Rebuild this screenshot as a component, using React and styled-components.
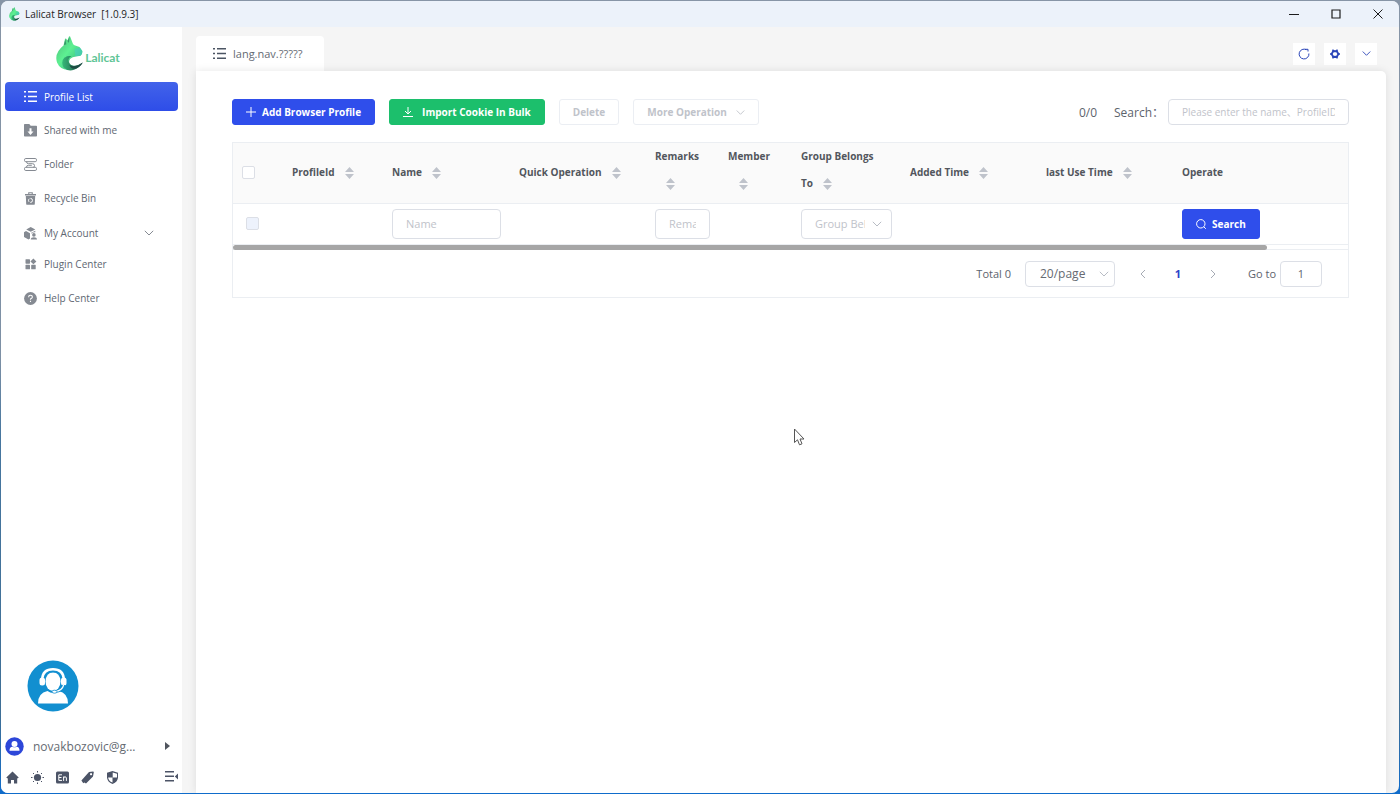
import React from "react";
import styled, { createGlobalStyle, css } from "styled-components";

const GlobalStyle = createGlobalStyle`
  *, *::before, *::after { box-sizing: border-box; }
  body {
    margin: 0;
    background: linear-gradient(#8795a6 0%, #7d90a5 45%, #46769f 55%, #3f6f96 90%, #0f6ccb 100%);
    font-family: "Open Sans", "Noto Sans CJK SC", sans-serif;
    font-size: 10px;
    color: #5d636d;
  }
  button, input, select { font: inherit; color: inherit; margin: 0; }
  button { cursor: pointer; padding: 0; border: 0; background: none; }
  a { color: inherit; text-decoration: none; }
  svg { display: block; flex: none; }
`;

const Window = styled.div`
  display: flex;
  flex-direction: column;
  min-height: calc(100vh - 2px);
  margin: 1px;
  border-radius: 7px;
  overflow: hidden;
  background: #f5f5f5;
`;

const TitleBar = styled.header`
  display: flex;
  align-items: center;
  height: 26px;
  padding: 0 11px 0 8px;
  gap: 5px;
  background: #ecf2fa;
  color: #1c1c1c;
`;

const TitleText = styled.span`
  flex: 1;
  white-space: pre;
`;

const WindowControls = styled.div`
  display: flex;
  gap: 22px;
`;

const WindowButton = styled.button`
  display: grid;
  place-items: center;
  width: 20px;
  height: 24px;
`;

const Body = styled.div`
  display: flex;
  flex: 1;
`;

const Sidebar = styled.aside`
  display: flex;
  flex-direction: column;
  flex: none;
  width: 181px;
  padding: 8px 4px 9px;
  background: #fff;
`;

const Brand = styled.a`
  display: flex;
  justify-content: center;
  align-items: center;
  height: 37px;
  margin-bottom: 10px;
  padding-right: 7px;
`;

const BrandName = styled.span`
  margin: 8px 0 0 1px;
  font: 700 12px Lato, sans-serif;
  color: #5fc596;
`;

const Nav = styled.nav`
  display: flex;
  flex-direction: column;
  gap: 4px;
`;

const NavLink = styled.a`
  display: flex;
  align-items: center;
  gap: 7px;
  height: ${(p) => (p.$expandable ? 28 : p.$active ? 29 : 30)}px;
  padding: ${(p) => (p.$expandable ? "4px" : "0")} 24px 0 19px;
  border-radius: 4px;
  color: #606772;
  > svg { color: #858a92; }
  ${(p) => p.$active && css`
    background: linear-gradient(#4263ea, #2e4de8);
    color: #fff;
    > svg { color: #fff; }
  `}
`;

const NavLabel = styled.span`
  flex: 1;
`;

const SupportButton = styled.button`
  width: 52px;
  height: 52px;
  margin: auto 0 24px 22px;
`;

const UserRow = styled.button`
  display: flex;
  align-items: center;
  gap: 9px;
  height: 20px;
  padding-right: 6px;
  font-size: 12px;
  text-align: left;
  color: #666b73;
`;

const UserName = styled.span`
  flex: 1;
`;

const ToolRow = styled.div`
  display: flex;
  align-items: center;
  gap: 11px;
  margin-top: 14px;
  color: #4c5467;
`;

const ToolButton = styled.button`
  display: grid;
  place-items: center;
  width: 14px;
  height: 14px;
  margin-left: ${(p) => (p.$last ? "auto" : "0")};
`;

const Main = styled.main`
  display: flex;
  flex-direction: column;
  flex: 1;
  min-width: 0;
  padding: 9px 13px 0 14px;
`;

const TopRow = styled.div`
  display: flex;
  justify-content: space-between;
  align-items: center;
  height: 35px;
  padding-right: 9px;
`;

const Tab = styled.button`
  display: flex;
  align-items: center;
  gap: 7px;
  height: 35px;
  width: 128px;
  padding-left: 17px;
  border-radius: 4px 4px 0 0;
  background: #fff;
  font-size: 11px;
  color: #646a73;
  > svg { color: #4b5563; }
`;

const Actions = styled.div`
  display: flex;
  gap: 9px;
`;

const ActionButton = styled.button`
  display: grid;
  place-items: center;
  width: 22px;
  height: 22px;
  background: #fff;
  color: #2b45b8;
`;

const Panel = styled.section`
  flex: 1;
  padding: 28px 37px 36px 36px;
  border-radius: 0 5px 0 0;
  background: #fff;
  box-shadow: 0 0 9px rgba(0, 0, 0, 0.1);
  clip-path: inset(-10px -12px 0 -12px);
`;

const Toolbar = styled.div`
  display: flex;
  align-items: center;
  gap: 14px;
  margin-bottom: 17px;
`;

const variants = {
  primary: css`background: #2f4eeb; border-color: #2f4eeb; color: #fff;`,
  success: css`background: #1cbf6c; border-color: #1cbf6c; color: #fff;`,
  plain: css`background: #fff; border-color: #ebeef3; color: #bfc3ca;`,
};

const Button = styled.button`
  display: flex;
  align-items: center;
  gap: ${(p) => (p.$wide ? 9 : 6)}px;
  height: ${(p) => (p.$tall ? 30 : 26)}px;
  padding: 0 13px;
  border: 1px solid;
  border-radius: 3px;
  font-weight: 700;
  white-space: nowrap;
  ${(p) => variants[p.$variant]}
`;

const SearchBox = styled.div`
  display: flex;
  align-items: center;
  gap: 17px;
  margin-left: auto;
  font-size: 12px;
`;

const SearchLabel = styled.label`
  display: flex;
  align-items: center;
  gap: 4px;
`;

const TextInput = styled.input`
  width: ${(p) => p.$width || "100%"};
  height: ${(p) => (p.$tall ? 30 : 26)}px;
  padding: 0 13px;
  border: 1px solid #dcdfe6;
  border-radius: 4px;
  background: #fff;
  outline: 0;
  font-size: ${(p) => (p.$small ? 10 : 11)}px;
  text-align: ${(p) => (p.$center ? "center" : "left")};
  &::placeholder { color: #bfc3ca; opacity: 1; }
`;

const TableCard = styled.div`
  border: 1px solid #ebeef2;
`;

const Table = styled.table`
  width: 100%;
  table-layout: fixed;
  border-collapse: collapse;
`;

const HeadCell = styled.th`
  height: 60px;
  padding: 0 9px ${(p) => (p.$twoLine ? 5 : 0)}px;
  border-bottom: 1px solid #ebeef2;
  background: #fafafa;
  font-weight: 700;
  line-height: 27px;
  text-align: left;
  color: #52565d;
`;

const KeepTogether = styled.span`
  white-space: nowrap;
`;

const Cell = styled.td`
  height: 41px;
  padding: 0 9px;
`;

const SortButton = styled.button`
  display: inline-grid;
  place-items: center;
  width: 30px;
  height: 14px;
  vertical-align: -3px;
  color: #bfc3cb;
`;

const Checkbox = styled.input`
  appearance: none;
  display: block;
  width: 13px;
  height: 13px;
  margin: 0 0 0 ${(p) => (p.disabled ? 4 : 0)}px;
  border: 1px solid #dcdfe6;
  border-radius: 2px;
  background: ${(p) => (p.disabled ? "#edf2fc" : "#fff")};
`;

const SelectBox = styled.span`
  position: relative;
  display: block;
  width: ${(p) => p.$width || "100%"};
  > svg {
    position: absolute;
    top: 50%;
    right: ${(p) => (p.$inset ? 10 : 6)}px;
    margin-top: -5px;
    color: #b8bcc4;
    pointer-events: none;
  }
`;

const Select = styled.select`
  display: block;
  appearance: none;
  width: 100%;
  height: ${(p) => (p.$tall ? 30 : 26)}px;
  padding: 0 26px 0 ${(p) => (p.$tall ? 13 : 14)}px;
  border: 1px solid #dcdfe6;
  border-radius: 4px;
  background: #fff;
  font-size: ${(p) => (p.$tall ? 11 : 12)}px;
  color: ${(p) => (p.$tall ? "#bfc3ca" : "#666a72")};
`;

const ScrollTrack = styled.div`
  height: 6px;
  border: solid #ebeef2;
  border-width: 1px 0;
  display: flex;
  align-items: center;
`;

const ScrollThumb = styled.div`
  flex: none;
  width: 92.7%;
  height: 5px;
  border-radius: 3px;
  background: #a6a6a6;
`;

const Pagination = styled.div`
  display: flex;
  justify-content: flex-end;
  align-items: center;
  height: 47px;
  padding-right: 26px;
  font-size: 11px;
`;

const Total = styled.span`
  margin-right: 14px;
`;

const Pages = styled.div`
  display: flex;
  align-items: center;
  justify-content: space-between;
  width: 82px;
  margin: 0 29px 0 22px;
`;

const PageButton = styled.button`
  display: grid;
  place-items: center;
  width: 12px;
  height: 20px;
  font-weight: 700;
  color: ${(p) => (p.$current ? "#2c43c8" : "#a6abb4")};
`;

const GoTo = styled.label`
  display: flex;
  align-items: center;
  gap: 4px;
`;

const Pointer = styled.svg`
  position: absolute;
  top: 428px;
  left: 793px;
  pointer-events: none;
`;

const Icon = ({ size = 13, box = 24, children }) => (
  <svg width={size} height={size} viewBox={`0 0 ${box} ${box}`} fill="currentColor" aria-hidden="true">
    {children}
  </svg>
);

const Line = ({ d, size = 10, width = 1 }) => (
  <svg width={size} height={size} viewBox="0 0 10 10" fill="none" stroke="currentColor" strokeWidth={width} aria-hidden="true">
    <path d={d} />
  </svg>
);

const ListIcon = () => (
  <Icon box={13}>
    <path d="M0 1h2v1.500H0zM4 1h9v1.500H4zM0 5.700h2v1.500H0zM4 5.700h9v1.500H4zM0 10.400h2v1.500H0zM4 10.400h9v1.500H4z" />
  </Icon>
);

const SharedIcon = () => (
  <Icon box={13}>
    <path fillRule="evenodd" d="M.8 0h4.500l1.400 1.700h5.500q.8 0 .8.800v9.200q0 .8-.8.800H.8q-.8 0-.8-.8V.8Q0 0 .8 0zM5.500 4.200v3.300H3.500L6.500 11l3-3.500h-2V4.200z" />
  </Icon>
);

const FolderIcon = () => (
  <svg width="13" height="13" viewBox="0 0 13 13" fill="none" stroke="currentColor" aria-hidden="true">
    <rect x=".5" y=".5" width="12" height="3.200" rx="1.300" />
    <rect x=".5" y="9.300" width="12" height="3.200" rx="1.300" />
    <path d="M2.500 3.700q0 2 2 2h4q2 0 2 1.800t-1.200 1.800M2.500 9.300q0-2 1.800-2h3.500" />
  </svg>
);

const BinIcon = () => (
  <Icon box={13}>
    <path fillRule="evenodd" d="M4.200.3h4.600V2H12v1.400H1V2h3.200zM5.300 1.200V2h2.400v-.8zM1.800 4.100h9.400l-.4 7.800q-.1.900-1 .9H3.200q-.9 0-1-.9z" />
    <circle cx="6.500" cy="8.400" r="2" fill="none" stroke="#fff" strokeWidth="1" strokeDasharray="3.200 1" />
  </Icon>
);

const AccountIcon = () => (
  <Icon box={13}>
    <path d="M6.700 0 11.300 2.400 6.700 4.800 2.200 2.400zM0 5.300l2-1.200 4 2.200v5.200l-1.500.9L0 10zM11.300 3.700v1.600Q9 4.900 7.700 6.500L6.900 6z" />
    <circle cx="9.900" cy="7.900" r="1.800" />
    <path d="M6.700 12.500q.3-2.300 3.200-2.300t3.100 2.300z" />
  </Icon>
);

const PluginIcon = () => (
  <Icon box={13}>
    <rect x="1.500" y="1.200" width="4.500" height="4.500" rx=".6" />
    <path d="m9.400.5 3 2.900-3 2.900-3-2.900z" />
    <rect x="1.500" y="6.800" width="4.500" height="4.500" rx=".6" />
    <rect x="7.200" y="6.800" width="4.500" height="4.500" rx=".6" />
  </Icon>
);

const HelpIcon = () => (
  <Icon box={13}>
    <circle cx="6.500" cy="6.500" r="6.400" />
    <path d="M4.600 5.200q0-1.900 1.900-1.900t1.900 1.700q0 1-1.900 2v.8M6.500 8.800v1.200" fill="none" stroke="#fff" strokeWidth="1.100" />
  </Icon>
);

const ChevronDown = ({ size = 10 }) => <Line size={size} d="M.8 2.800 5 7l4.200-4.200" />;

const CatLogo = ({ size }) => (
  <svg width={size} height={Math.round(size * 1.25)} viewBox="0 0 28 35" aria-hidden="true">
    <defs>
      <linearGradient id="fur" x1="0" y1="0" x2="1" y2="1">
        <stop offset="0" stopColor="#4dbb78" />
        <stop offset=".45" stopColor="#5df092" />
        <stop offset="1" stopColor="#2ba77d" />
      </linearGradient>
      <linearGradient id="tail" x1="0" y1="0" x2="1" y2="0">
        <stop offset="0" stopColor="#35b878" />
        <stop offset="1" stopColor="#1f4a43" />
      </linearGradient>
    </defs>
    <path fill="url(#fur)" d="M7.500 9.500 9 3q.3-1 1.200-.2l1.200 1.600L13 .6q.5-.9 1.100 0l2.600 6.600q.5 1.500 1.800 2.100l5 1.700 2.800 4q.5 3-1.700 4.700l-4.600.9q-3.700.4-5.700 2.200-2.200 2.500-.3 5.500L12 34Q4 33.500 1 26.500-2 17 7.500 9.500z" />
    <path fill="#47cfc3" opacity=".6" d="m18.500 13 5.700-1.200 2 3.300q.3 3-1.700 4.400l-5.200.8z" />
    <path fill="url(#tail)" d="M8.500 21.500Q4.500 25.500 7.500 31.300 12 36 18 33.800q6-2.300 8.800-7.200-5 3.600-9.300 3.100-5.500-.9-5-6.200.5-2.500 3-3.200-4-.8-6.500 1.200z" />
    <path fill="#1d4c43" d="M13.500 29q5.500 3.500 13.300-2.400-3.300 5.800-8.800 6.200-3.500-.4-4.500-3.800z" />
    <path fill="#256b55" opacity=".6" d="m9.300 3.300 1 5-2.400 1zM13.500 1l-.6 6-1.400-2z" />
  </svg>
);

const SortArrows = () => (
  <svg width="9" height="12" viewBox="0 0 9 12" fill="currentColor" aria-hidden="true">
    <path d="M4.500 0 9 5H0zM4.500 12 9 7H0z" />
  </svg>
);

const navItems = [
  { label: "Profile List", icon: <ListIcon />, active: true },
  { label: "Shared with me", icon: <SharedIcon /> },
  { label: "Folder", icon: <FolderIcon /> },
  { label: "Recycle Bin", icon: <BinIcon /> },
  { label: "My Account", icon: <AccountIcon />, expandable: true },
  { label: "Plugin Center", icon: <PluginIcon /> },
  { label: "Help Center", icon: <HelpIcon /> },
];

const columns = [
  { label: "ProfileId", width: 100 },
  { label: "Name", width: 127 },
  { label: "Quick Operation", width: 136 },
  { label: "Remarks", width: 73, twoLine: true },
  { label: "Member", width: 73, twoLine: true },
  { label: "Group Belongs", lastWord: "To", width: 109, twoLine: true },
  { label: "Added Time", width: 136 },
  { label: "last Use Time", width: 136 },
];

const SideNav = () => (
  <Sidebar>
    <Brand href="#" aria-label="Lalicat home">
      <CatLogo size={28} />
      <BrandName>Lalicat</BrandName>
    </Brand>
    <Nav>
      {navItems.map((item) => (
        <NavLink key={item.label} href="#" $active={item.active} $expandable={item.expandable}>
          {item.icon}
          <NavLabel>{item.label}</NavLabel>
          {item.expandable && <ChevronDown size={10} />}
        </NavLink>
      ))}
    </Nav>
    <SupportButton aria-label="Customer support">
      <svg width="52" height="52" viewBox="0 0 52 52" aria-hidden="true">
        <circle cx="26" cy="26" r="25.500" fill="#128fd0" />
        <path fill="#fff" d="M11 43.500q0-10.500 9.500-12.500 5.500 4 11 0Q41 33 41 43.500z" />
        <ellipse cx="26" cy="21.500" rx="7.500" ry="9.500" fill="#fff" />
        <path d="M15.200 19q.6-9.800 10.800-9.800T36.800 19" fill="none" stroke="#fff" strokeWidth="2.600" />
        <path d="M17 17.500q2-5.300 9-5.300t9 5.300" fill="none" stroke="#128fd0" strokeWidth=".8" />
        <rect x="12.500" y="17.500" width="5.500" height="8" rx="2.500" fill="#fff" />
        <rect x="34" y="17.500" width="5.500" height="8" rx="2.500" fill="#fff" />
        <path d="M37 25q-1.500 6-9 6.700" fill="none" stroke="#128fd0" strokeWidth="2.600" />
        <path d="M36.700 25q-1.500 5.700-8.700 6.700" fill="none" stroke="#fff" strokeWidth="1.200" />
        <ellipse cx="27.500" cy="31.700" rx="2.500" ry="1.500" fill="#fff" stroke="#128fd0" strokeWidth=".8" />
      </svg>
    </SupportButton>
    <UserRow>
      <svg width="19" height="19" viewBox="0 0 19 19" aria-hidden="true">
        <circle cx="9.500" cy="9.500" r="9.200" fill="#2d47d9" />
        <circle cx="9.500" cy="7" r="3" fill="#fff" />
        <path d="M4.500 13.800q0-4 3-4 2 1 4 0 3 0 3 4z" fill="#fff" />
      </svg>
      <UserName>novakbozovic@g...</UserName>
      <Icon size={10} box={10}><path d="M3 1l5 4-5 4z" fill="#50555e" /></Icon>
    </UserRow>
    <ToolRow>
      <ToolButton aria-label="Home">
        <Icon box={13}><path fillRule="evenodd" d="m6.500.5 6.200 6-.7.800h-.8v5.200H8V9H5v3.500H1.800V7.300H1l-.7-.8z" /></Icon>
      </ToolButton>
      <ToolButton aria-label="Theme">
        <Icon box={13}>
          <circle cx="6.500" cy="6.500" r="3.600" />
          <path d="M6.500 0v1.500M6.500 11.500V13M0 6.500h1.500M11.500 6.500H13M2 2l1 1M10 10l1 1M2 11l1-1M10 3l1-1" stroke="currentColor" />
        </Icon>
      </ToolButton>
      <ToolButton aria-label="Language">
        <Icon box={13}>
          <rect y=".5" width="13" height="12" rx="1.500" />
          <path d="M6 3.800H2.800v5.600H6M2.800 6.500h2.700M7.600 9.900V5.500M7.600 7q.2-1.200 1.400-1.200T10.400 7v2.900" fill="none" stroke="#fff" />
        </Icon>
      </ToolButton>
      <ToolButton aria-label="Tags">
        <Icon box={13}><path fillRule="evenodd" d="M8 1l4-.6q.9 0 .8.900L12 5.500l-7 7L3.300 11.500l-1 .8L.4 9.500zM10 2.100a1.100 1.100 0 1 0 .1 0z" /></Icon>
      </ToolButton>
      <ToolButton aria-label="Security">
        <Icon box={13}>
          <path d="M6.500 0 12 1.800v4.500q0 4.500-5.500 6.700Q1 10.800 1 6.300V1.800z" />
          <path d="M6.700 1.500v4.900H11V2.800zM6.500 6.400H2.100q.3 3.300 4.400 5.200z" fill="#fff" />
        </Icon>
      </ToolButton>
      <ToolButton aria-label="Collapse sidebar" $last>
        <Icon box={13}><path d="M0 0h9v1.500H0zM0 4.500h9V6H0zM0 9h9v1.500H0zM13 2.500v6L9.800 5.500z" /></Icon>
      </ToolButton>
    </ToolRow>
  </Sidebar>
);

const ProfileTable = () => (
  <TableCard>
    <Table>
      <colgroup>
        <col width="50" />
        {columns.map((c) => <col key={c.label} width={c.width} />)}
        <col />
      </colgroup>
      <thead>
        <tr>
          <HeadCell><Checkbox type="checkbox" aria-label="Select all" /></HeadCell>
          {columns.map((c) => {
            const sort = <SortButton aria-label={`Sort by ${c.label}`}><SortArrows /></SortButton>;
            return (
              <HeadCell key={c.label} $twoLine={c.twoLine}>
                {c.label}
                {c.lastWord ? <> <KeepTogether>{c.lastWord}{sort}</KeepTogether></> : sort}
              </HeadCell>
            );
          })}
          <HeadCell>Operate</HeadCell>
        </tr>
      </thead>
      <tbody>
        <tr>
          <Cell><Checkbox type="checkbox" disabled aria-label="Select row" /></Cell>
          <Cell />
          <Cell><TextInput $tall placeholder="Name" aria-label="Name" /></Cell>
          <Cell />
          <Cell><TextInput $tall placeholder="Remarks" aria-label="Remarks" /></Cell>
          <Cell />
          <Cell>
            <SelectBox $inset>
              <Select $tall aria-label="Group Belongs To"><option>Group Belongs To</option></Select>
              <ChevronDown size={10} />
            </SelectBox>
          </Cell>
          <Cell />
          <Cell />
          <Cell>
            <Button $variant="primary" $tall>
              <svg width="10" height="10" viewBox="0 0 10 10" fill="none" stroke="currentColor" aria-hidden="true">
                <circle cx="4.800" cy="4.800" r="4.200" /><path d="m7.800 7.800 2 2" />
              </svg>
              Search
            </Button>
          </Cell>
        </tr>
      </tbody>
    </Table>
    <ScrollTrack><ScrollThumb /></ScrollTrack>
    <Pagination>
      <Total>Total 0</Total>
      <SelectBox $width="90px">
        <Select aria-label="Page size"><option>20/page</option></Select>
        <ChevronDown size={10} />
      </SelectBox>
      <Pages>
        <PageButton aria-label="Previous page"><Line d="M7 1 3 5l4 4" /></PageButton>
        <PageButton $current>1</PageButton>
        <PageButton aria-label="Next page"><Line d="m3 1 4 4-4 4" /></PageButton>
      </Pages>
      <GoTo>
        Go to
        <TextInput $width="42px" $center defaultValue="1" />
      </GoTo>
    </Pagination>
  </TableCard>
);

export default function App() {
  return (
    <>
      <GlobalStyle />
      <Window>
        <TitleBar>
          <CatLogo size={11} />
          <TitleText>{"Lalicat Browser  [1.0.9.3]"}</TitleText>
          <WindowControls>
            <WindowButton aria-label="Minimize"><Line d="M0 5.500h10" /></WindowButton>
            <WindowButton aria-label="Maximize"><Line d="M1 1h8v8H1z" width={1.2} /></WindowButton>
            <WindowButton aria-label="Close"><Line d="m.5.5 9 9m0-9-9 9" /></WindowButton>
          </WindowControls>
        </TitleBar>
        <Body>
          <SideNav />
          <Main>
            <TopRow>
              <Tab><ListIcon />lang.nav.?????</Tab>
              <Actions>
                <ActionButton aria-label="Refresh">
                  <svg width="12" height="12" viewBox="0 0 12 12" fill="none" stroke="currentColor" aria-hidden="true">
                    <path d="M8.300 1.700A4.900 4.900 0 1 0 10.900 5.500M7 1.300h3v2.200" />
                  </svg>
                </ActionButton>
                <ActionButton aria-label="Settings">
                  <svg width="10" height="10" viewBox="0 0 10 10" fill="none" stroke="currentColor" aria-hidden="true">
                    <path d="M3.300 2 5 2.300 6.700 2l1.700 3-1.700 3L5 7.700 3.300 8 1.600 5z" strokeWidth="1.900" />
                    <path d="M3 .5v2M7 .5v2M3 7.500v2M7 7.500v2M0 5h2M8 5h2" strokeWidth="1.400" />
                  </svg>
                </ActionButton>
                <ActionButton aria-label="More"><ChevronDown size={9} /></ActionButton>
              </Actions>
            </TopRow>
            <Panel>
              <Toolbar>
                <Button $variant="primary"><Line d="M5 0v10M0 5h10" />Add Browser Profile</Button>
                <Button $variant="success" $wide><Line d="M5 0v7M2 4l3 3 3-3M0 9.500h10" />Import Cookie In Bulk</Button>
                <Button $variant="plain">Delete</Button>
                <Button $variant="plain" $wide>More Operation<ChevronDown size={9} /></Button>
                <SearchBox>
                  <span>0/0</span>
                  <SearchLabel>
                    Search：
                    <TextInput $width="181px" $small placeholder="Please enter the name、ProfileID" />
                  </SearchLabel>
                </SearchBox>
              </Toolbar>
              <ProfileTable />
            </Panel>
          </Main>
        </Body>
      </Window>
      <Pointer width="13" height="19" viewBox="0 0 13 19" aria-hidden="true">
        <path d="M1.500 1v13.500l3-2.700 2 5 2.500-1-2-4.800h4z" fill="#fff" stroke="#555" />
      </Pointer>
    </>
  );
}
